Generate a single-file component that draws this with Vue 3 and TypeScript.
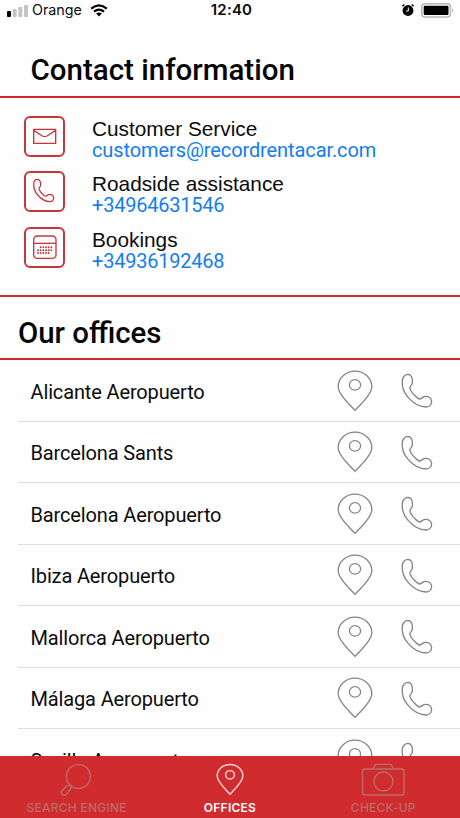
<script setup lang="ts">
interface Contact {
  icon: 'mail' | 'phone' | 'calendar'
  title: string
  value: string
  href: string
}

const contacts: Contact[] = [
  { icon: 'mail', title: 'Customer Service', value: 'customers@recordrentacar.com', href: 'mailto:customers@recordrentacar.com' },
  { icon: 'phone', title: 'Roadside assistance', value: '+34964631546', href: 'tel:+34964631546' },
  { icon: 'calendar', title: 'Bookings', value: '+34936192468', href: 'tel:+34936192468' },
]

const offices: string[] = [
  'Alicante Aeropuerto',
  'Barcelona Sants',
  'Barcelona Aeropuerto',
  'Ibiza Aeropuerto',
  'Mallorca Aeropuerto',
  'Málaga Aeropuerto',
  'Sevilla Aeropuerto',
]

const phonePath =
  'M24 7C16 7 8 14 7 24C5 45 11 62 25 77C38 92 58 105 79 105C88 105 95 98 95 88C94 79 86 73 76 73C69 73 66 80 59 81C53 81 47 73 39 65C33 58 29 52 30 46C31 41 37 40 37 33C38 24 37 8 24 7Z'
const calendarDots: number[][] = [
  [92, 127], [100, 127], [108, 127], [116, 127], [124, 127],
  [84, 136], [92, 136], [100, 136], [108, 136], [116, 136], [124, 136],
  [84, 144], [92, 144], [100, 144], [108, 144], [116, 144],
]
</script>

<template>
  <div class="screen">
    <header class="status">
      <div class="carrier">
        <svg class="signal" viewBox="0 0 21 13"><rect x="0" y="7" width="4" height="6" rx="1" fill="#000" /><g fill="#c4c4c4"><rect x="5.7" y="5" width="4" height="8" rx="1" /><rect x="11.3" y="3" width="4" height="10" rx="1" /><rect x="17" y="1" width="4" height="12" rx="1" /></g></svg>
        <span>Orange</span>
        <svg class="wifi" viewBox="0 0 18 13" fill="none" stroke="#000"><path d="M1.2 4.7Q9-2 16.8 4.7" stroke-width="2.3" /><path d="M4 7.7Q9 3.4 14 7.7" stroke-width="2.2" /><path d="M6.1 9.6Q9 7.3 11.9 9.6L9 12.6Z" fill="#000" stroke="none" /></svg>
      </div>
      <span class="time">12:40</span>
      <div class="power">
        <svg class="alarm" viewBox="0 0 14 14"><circle cx="7" cy="7.5" r="5.4" /><path d="M1.4 3.3L3.3 1.4M12.6 3.3L10.7 1.4" stroke="#000" stroke-width="1.4" /><path d="M7.3 4.5V8H5" fill="none" stroke="#fff" stroke-width="1" /></svg>
        <svg class="battery" viewBox="0 0 33 15"><rect x=".8" y=".8" width="28.6" height="13.2" rx="3.3" fill="#fff" stroke="#b5b5b5" stroke-width="1.5" /><rect x="2.7" y="2.7" width="24.8" height="9.4" rx="1.4" /><path d="M31 5.2Q33 7.4 31 9.6Z" fill="#aaa" /></svg>
      </div>
    </header>

    <h1 class="heading contact-heading">Contact information</h1>

    <section class="contacts">
      <div v-for="c in contacts" :key="c.title" class="contact">
        <span class="tile">
          <svg v-if="c.icon === 'mail'" class="glyph" viewBox="42 33 123 123"><path d="M71 73H137V115H71ZM71 76L97 93Q104 97 111 93L137 76" /></svg>
          <svg v-else-if="c.icon === 'phone'" class="glyph" viewBox="-29 -25 185 185"><path class="handset" :d="phonePath" transform="translate(8 6) scale(1.02)" /></svg>
          <svg v-else class="glyph" viewBox="42 66 123 123">
            <rect x="71" y="93" width="67" height="67" rx="11" /><path d="M71 115H138" />
            <circle v-for="(d, i) in calendarDots" :key="i" class="dot" :cx="d[0]" :cy="d[1]" r="2.9" />
          </svg>
        </span>
        <div class="contact-text">
          <span class="contact-title">{{ c.title }}</span>
          <a class="contact-value" :class="{ number: c.icon !== 'mail' }" :href="c.href">{{ c.value }}</a>
        </div>
      </div>
    </section>

    <h2 class="heading offices-heading">Our offices</h2>

    <ul class="offices">
      <li v-for="office in offices" :key="office" class="office">
        <span class="office-name">{{ office }}</span>
        <svg class="pin" viewBox="0 0 36 42"><path d="M18 40.4C15 36.5 1.2 25.5 1.2 16.8C1.2 8 8.7 1.2 18 1.2S34.8 8 34.8 16.8C34.8 25.5 21 36.5 18 40.4Z" /><ellipse cx="18" cy="14.9" rx="5.6" ry="5.3" /></svg>
        <svg class="call" viewBox="0 0 100 112"><path :d="phonePath" /></svg>
      </li>
    </ul>

    <nav class="tabs">
      <a class="tab">
        <svg class="tab-icon" viewBox="0 0 48 34"><circle cx="25.4" cy="13.6" r="12" /><path d="M17.4 22.3Q14.9 21.7 12.8 23.7L8.6 28.3Q7.6 31 9.9 32Q12.1 32.8 13.9 30.7L17.6 26Q18.6 23.8 17.4 22.3ZL18.6 23" /></svg>
        <span>SEARCH ENGINE</span>
      </a>
      <a class="tab active">
        <svg class="tab-icon" viewBox="0 0 48 34"><path d="M24 31.3C21.5 28 11.2 19.5 11.2 13.1C11.2 6.5 16.9 1.5 24 1.5S36.8 6.5 36.8 13.1C36.8 19.5 26.5 28 24 31.3Z" /><ellipse cx="24" cy="11.8" rx="4.4" ry="4.2" /></svg>
        <span>OFFICES</span>
      </a>
      <a class="tab">
        <svg class="tab-icon" viewBox="0 0 48 34"><rect x="3.5" y="6" width="41.5" height="26" rx="2.5" /><path d="M14 6L16 2Q16.4 1.4 17 1.4H31.5Q32 1.4 32.4 2L34.5 6" /><circle cx="24.4" cy="18.5" r="9.5" /></svg>
        <span>CHECK-UP</span>
      </a>
    </nav>
  </div>
</template>

<style>
body { background: #fff; }
</style>

<style scoped>
* { box-sizing: border-box; }
.screen { width: 460px; height: 818px; overflow: hidden; display: flex; flex-direction: column; background: #fefefe; color: #0c0c0c; font-family: Roboto, "Liberation Sans", sans-serif; }
.status { flex: none; height: 20px; padding: 0 6px 0 7px; display: grid; grid-template-columns: 1fr auto 1fr; align-items: center; font-family: Inter, sans-serif; font-size: 14.3px; line-height: 20px; }
.carrier, .power { display: flex; align-items: center; }
.power { justify-content: flex-end; gap: 6px; }
.signal { width: 21px; height: 13px; margin-right: 4px; }
.wifi { width: 18px; height: 13px; margin-left: 8px; }
.time { font-size: 15px; font-weight: 600; letter-spacing: .2px; padding-left: 2px; }
.alarm { width: 14px; height: 14px; }
.battery { width: 33px; height: 15px; }
.heading { flex: none; margin: 0; font-weight: 500; line-height: 36px; color: #050505; border-bottom: 2px solid #c92b2f; white-space: nowrap; }
.contact-heading { height: 78px; padding: 32px 0 0 30.5px; font-size: 29.5px; }
.contacts { flex: none; height: 199px; padding: 18px 24px 0; border-bottom: 2px solid #c92b2f; }
.contact { height: 55.4px; display: flex; align-items: flex-start; gap: 27px; }
.tile { width: 41px; height: 41px; border: 2px solid #c8363b; border-radius: 6px; display: flex; align-items: center; justify-content: center; }
.glyph { flex: none; width: 41px; height: 41px; fill: none; stroke: #c8363b; stroke-width: 4; stroke-linejoin: round; }
.handset { stroke-width: 5.5; }
.dot { fill: #c8363b; stroke: none; }
.contact-text { display: flex; flex-direction: column; white-space: nowrap; }
.contact-title { font-family: "Liberation Sans", sans-serif; font-size: 20.8px; line-height: 22px; padding-top: 2px; }
.contact-value { font-size: 20px; line-height: 21px; color: #147df0; text-decoration: none; letter-spacing: -.1px; }
.contact-value.number { letter-spacing: -.22px; }
.offices-heading { height: 63px; padding: 18px 0 0 18px; font-size: 29.4px; }
.offices { flex: 1; min-height: 0; overflow: hidden; margin: 0; padding: 0 0 0 18px; list-style: none; }
.office { height: 61.5px; padding: 1px 27px 0 12.5px; border-bottom: 1px solid #dedede; display: flex; align-items: center; }
.office-name { flex: 1; padding-top: 2px; font-size: 20px; line-height: 24px; letter-spacing: -.14px; }
.pin, .call { fill: none; stroke: #858585; }
.pin { width: 36px; height: 42px; stroke-width: 1.3; margin-right: 26.5px; }
.call { width: 33.3px; height: 37.3px; stroke-width: 4; }
.tabs { flex: none; height: 62px; padding-top: 7px; display: grid; grid-template-columns: repeat(3, 1fr); background: #d02b2f; }
.tab { display: flex; flex-direction: column; align-items: center; color: #bd6b64; font-family: Inter, sans-serif; font-size: 12px; font-weight: 500; line-height: 16px; letter-spacing: .25px; }
.tab-icon { width: 48px; height: 34px; margin-bottom: 3px; fill: none; stroke: currentColor; stroke-width: 1.4; stroke-linejoin: round; }
.active { color: #fff; font-weight: 600; }
.active .tab-icon { stroke: #ffd9d5; }
</style>
